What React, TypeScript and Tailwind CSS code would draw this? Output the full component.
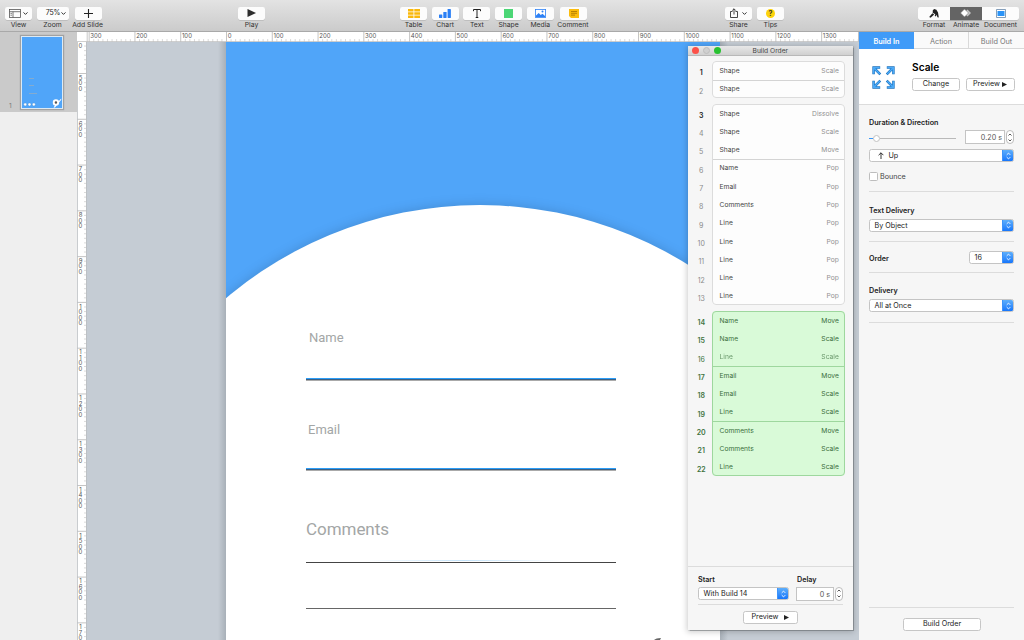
import clsx from "clsx"
import type { ReactNode } from "react"

type Build = { name: string; effect: string; dim?: boolean; strong?: boolean; divider?: boolean }
type Group = { active?: boolean; builds: Build[] }

const groups: Group[] = [
  {
    builds: [
      { name: "Shape", effect: "Scale", strong: true },
      { name: "Shape", effect: "Scale", divider: true },
    ],
  },
  {
    builds: [
      { name: "Shape", effect: "Dissolve", strong: true },
      { name: "Shape", effect: "Scale" },
      { name: "Shape", effect: "Move" },
      { name: "Name", effect: "Pop", divider: true },
      { name: "Email", effect: "Pop" },
      { name: "Comments", effect: "Pop" },
      { name: "Line", effect: "Pop" },
      { name: "Line", effect: "Pop" },
      { name: "Line", effect: "Pop" },
      { name: "Line", effect: "Pop" },
      { name: "Line", effect: "Pop" },
    ],
  },
  {
    active: true,
    builds: [
      { name: "Name", effect: "Move" },
      { name: "Name", effect: "Scale" },
      { name: "Line", effect: "Scale", dim: true },
      { name: "Email", effect: "Move", divider: true },
      { name: "Email", effect: "Scale" },
      { name: "Line", effect: "Scale" },
      { name: "Comments", effect: "Move", divider: true },
      { name: "Comments", effect: "Scale" },
      { name: "Line", effect: "Scale" },
    ],
  },
]

// one hundred points at the current zoom
const STEP = 45.78
const columns = [-300, -200, -100, 0, 100, 200, 300, 400, 500, 600, 700, 800, 900, 1000, 1100, 1200, 1300]
const rows = [400, 500, 600, 700, 800, 900, 1000, 1100, 1200, 1300, 1400, 1500, 1600, 1700]
const tenths = [1, 2, 3, 4, 5, 6, 7, 8, 9]

function Chevron() {
  return (
    <svg className="h-[3px] w-[5px]" viewBox="0 0 5 3" fill="none" stroke="#333" strokeWidth="1">
      <path d="M.5 .4 2.5 2.4 4.5 .4" />
    </svg>
  )
}

function ToolButton({ label, className, children }: { label: string; className?: string; children: ReactNode }) {
  return (
    <div className="flex flex-col items-center">
      <div className={clsx("flex h-[13.5px] items-center justify-center rounded-[2px] bg-[#fcfcfc] shadow-[0_0.5px_0.5px_rgba(0,0,0,0.2)]", className ?? "w-[27px]")}>
        {children}
      </div>
      <div className="flex h-[9px] w-0 justify-center text-[6.8px] leading-[9px] whitespace-nowrap text-[#333]">{label}</div>
    </div>
  )
}

function Toolbar() {
  return (
    <header className="flex h-8 shrink-0 border-b border-[#a9a9a9] bg-linear-to-b from-[#e3e3e3] to-[#cbcbcb] pt-[6.5px]">
      <div className="flex w-[238px] gap-[4.5px] pl-[5px]">
        <ToolButton label="View">
          <svg className="mr-[2px] h-[9px] w-[12px]" viewBox="0 0 12 9" fill="none" stroke="#555" strokeWidth=".8">
            <rect x=".5" y=".5" width="11" height="8" />
            <path d="M.5 2.7h11M4 2.7v5.8M1.5 4.4h1.4M1.5 6.2h1.4" />
          </svg>
          <Chevron />
        </ToolButton>
        <ToolButton label="Zoom" className="w-[32px] pl-[7px]">
          <span className="mr-[1px] text-[7px] tracking-[-0.2px] text-[#222]">75%</span>
          <Chevron />
        </ToolButton>
        <ToolButton label="Add Slide" className="ml-[2px] w-[27px]">
          <svg className="h-[9px] w-[9px]" viewBox="0 0 9 9" stroke="#222" strokeWidth="1.1">
            <path d="M4.5 0v9M0 4.5h9" />
          </svg>
        </ToolButton>
      </div>
      <div className="w-[162px]">
        <div className="w-[27px]">
          <ToolButton label="Play">
            <svg className="h-[8px] w-[9px]" viewBox="0 0 9 8"><path d="M.5 0 9 4 .5 8z" fill="#2d2d2d" /></svg>
          </ToolButton>
        </div>
      </div>
      <div className="flex w-[325px] gap-[4.7px]">
        <ToolButton label="Table">
          <svg className="h-[9px] w-[12px]" viewBox="0 0 12 9" fill="#f9b80c">
            <path d="M0 0h5.5v2.5H0zM6.3 0H12v2.5H6.3zM0 3.2h5.5v2.5H0zM6.3 3.2H12v2.5H6.3zM0 6.4h5.5V9H0zM6.3 6.4H12V9H6.3z" />
          </svg>
        </ToolButton>
        <ToolButton label="Chart">
          <svg className="h-[9px] w-[12px]" viewBox="0 0 12 9" fill="#2c80f5">
            <rect y="5.5" width="3.3" height="3.5" rx=".4" />
            <rect x="4.3" y="3" width="3.3" height="6" rx=".4" />
            <rect x="8.6" width="3.3" height="9" rx=".4" />
          </svg>
        </ToolButton>
        <ToolButton label="Text">
          <svg className="h-[9px] w-[8px]" viewBox="0 0 8 9" fill="none" stroke="#222" strokeWidth="1">
            <path d="M.5 2.2V.5h7v1.7M4 .5v8M2.7 8.5h2.6" />
          </svg>
        </ToolButton>
        <ToolButton label="Shape"><div className="h-[9px] w-[9px] bg-[#4bd675]" /></ToolButton>
        <ToolButton label="Media">
          <svg className="h-[9px] w-[11px]" viewBox="0 0 11 9">
            <rect x=".4" y=".4" width="10.2" height="8.2" fill="#fff" stroke="#2c80f5" strokeWidth=".8" />
            <path d="M1 8V6.5L3.7 4l2 2 1.8-1.2L10 7v1z" fill="#2c80f5" />
            <circle cx="7.5" cy="2.6" r="1" fill="#2c80f5" />
          </svg>
        </ToolButton>
        <ToolButton label="Comment" className="ml-[2px] w-[27px]">
          <svg className="h-[9px] w-[10px]" viewBox="0 0 10 9">
            <path d="M0 0h10v9H2L0 7z" fill="#fbbc0d" />
            <path d="M2 2.5h6M2 4.3h6M2 6.1h4" stroke="#a87400" strokeWidth=".8" />
          </svg>
        </ToolButton>
      </div>
      <div className="flex w-[193px] gap-[5px]">
        <ToolButton label="Share">
          <svg className="mr-[4px] h-[10px] w-[8px]" viewBox="0 0 8 10" fill="none" stroke="#333" strokeWidth=".9">
            <path d="M2.5 3.5h-2v6h7v-6h-2M4 6.5V.8M2.2 2.6 4 .8l1.8 1.8" />
          </svg>
          <Chevron />
        </ToolButton>
        <ToolButton label="Tips">
          <div className="h-[9px] w-[9px] rounded-full bg-[#fcd20a] text-center text-[7px] leading-[9px] font-bold text-[#333]">?</div>
        </ToolButton>
      </div>
      <div className="flex">
        <ToolButton label="Format" className="w-[32px] rounded-r-none">
          <svg className="h-[9px] w-[10px]" viewBox="0 0 10 9" fill="#222">
            <path d="M3.8 1.2 5.2 0 7.4.8 9 3.4l.8 5-1.4-.2-.7-2.4-.9 1.6-1.1-.6.6-1.6-2.600-1.400z" />
            <path d="M3.4 4.2 5.2 5.500 1.6 8.800.2 8z" />
          </svg>
        </ToolButton>
        <ToolButton label="Animate" className="w-[32px] rounded-none bg-[#646464]!">
          <svg className="h-[8px] w-[12px]" viewBox="0 0 12 8">
            <path d="M7.500 .5 11 4 7.500 7.500 4 4z" fill="#c4c4c4" />
            <path d="M4.5 0 8.5 4l-4 4-4-4z" fill="#fff" stroke="#646464" strokeWidth=".5" />
          </svg>
        </ToolButton>
        <ToolButton label="Document" className="w-[37px] rounded-l-none">
          <svg className="h-[9px] w-[10px]" viewBox="0 0 10 9">
            <rect x=".4" y=".4" width="9.2" height="8.2" rx=".5" fill="#fff" stroke="#53799f" strokeWidth=".8" />
            <rect x="1.5" y="2" width="7" height="5" fill="#2993f7" />
          </svg>
        </ToolButton>
      </div>
    </header>
  )
}

function Navigator() {
  return (
    <aside className="w-[77px] shrink-0 bg-[#efefef]">
      <div className="flex h-[80px] bg-[#cacaca] pt-[3.5px]">
        <div className="w-[21px] pt-[65px] pl-[9px] text-[6.5px] leading-[10px] text-[#777]">1</div>
        <div className="flex h-[73.5px] w-[42px] flex-col border border-[#dceaf5] bg-[#50a5f9] shadow-[0_0_1px_1px_rgba(100,100,100,0.4)]">
          <div className="mt-[41px] ml-[7px] h-[1px] w-[5px] bg-[#84abcf]" />
          <div className="mt-[7px] ml-[7px] h-[1px] w-[5px] bg-[#84abcf]" />
          <div className="mt-[7px] ml-[7px] h-[1px] w-[8px] bg-[#84abcf]" />
          <svg className="mt-[4px] h-[10px] w-[40px]" viewBox="0 0 40 10">
            <g fill="#fff" stroke="#3f81bd" strokeWidth=".3">
              <circle cx="2.5" cy="6.8" r="1.5" />
              <circle cx="7" cy="6.8" r="1.5" />
              <circle cx="11.5" cy="6.8" r="1.5" />
            </g>
            <path d="M32 10l2-3 6-6.5v1.3L35 8l-1.5 2z" fill="#fff" />
            <circle cx="34.5" cy="4.6" r="2.3" fill="#555" stroke="#fff" strokeWidth="2" />
          </svg>
        </div>
      </div>
    </aside>
  )
}

function TopRuler() {
  return (
    <svg className="h-[10px] w-[782px] shrink-0 bg-white" viewBox="77 32 782 10">
      {columns.map((value) => {
        const x = 226.5 + (value / 100) * STEP
        return (
          <g key={value}>
            <path d={`M${x} 32v10`} stroke="#b5b5b5" strokeWidth=".8" />
            {tenths.map((n) => (
              <path key={n} d={`M${x + (n * STEP) / 10} 39v3`} stroke="#d0d0d0" strokeWidth=".8" />
            ))}
            <text x={x + 1.2} y="38.4" fontSize="6" fill="#555">{Math.abs(value)}</text>
          </g>
        )
      })}
      <path d="M77 32h10.2v10H77z" fill="#fff" />
      <path d="M87.2 32v10M77 41.6h782" stroke="#bbb" strokeWidth=".8" />
    </svg>
  )
}

function SideRuler() {
  return (
    <svg className="h-[598px] w-[10px] shrink-0 bg-white" viewBox="77 42 10 598">
      {rows.map((value) => {
        const y = 73.5 + ((value - 500) / 100) * STEP
        return (
          <g key={value}>
            <path d={`M77 ${y}h10`} stroke="#b5b5b5" strokeWidth=".8" />
            {tenths.map((n) => (
              <path key={n} d={`M84 ${y + (n * STEP) / 10}h3`} stroke="#d0d0d0" strokeWidth=".8" />
            ))}
            {String(value).split("").map((digit, i) => {
              const baseline = y + 6.3 + i * 5.5
              // digits scrolled above the ruler or below the window are left out
              if (baseline < 44 || baseline > 641) return null
              return <text key={i} x="80.5" y={Math.max(baseline, 47.5)} fontSize="6" textAnchor="middle" fill="#555">{digit}</text>
            })}
          </g>
        )
      })}
      <path d="M77.3 42v598M86.5 42v598" stroke="#bcc0c4" />
    </svg>
  )
}

function Slide() {
  return (
    <div className="relative ml-[139px] h-[598px] w-[494px] overflow-hidden bg-[#50a5f9]">
      <svg className="absolute inset-0 h-[598px] w-[494px]" viewBox="226 42 494 598">
        <circle cx="480" cy="598" r="393" fill="#fff" className="drop-shadow-[0_0_6px_rgba(0,0,0,0.16)]" />
        <path d="M226 590h494v50H226z" fill="#fff" />
        <path d="M654 640q2-2 7-2l-1 2z" fill="#666" />
      </svg>
      <div className="relative flex flex-col pt-[286px] pl-[80px] font-['Roboto'] text-[#a3a6a6]">
        <div className="h-[20px] pl-[3px] text-[13px] leading-[20px]">Name</div>
        <div className="mt-[30px] h-[3px] w-[310px] border-b border-[#aaa] bg-linear-to-b from-[#2b9df8] from-50% to-[#3b5f83] to-50%" />
        <div className="mt-[39px] h-[20px] pl-[2px] text-[13px] leading-[20px]">Email</div>
        <div className="mt-[28px] h-[3px] w-[310px] border-b border-[#aaa] bg-linear-to-b from-[#2b9df8] from-50% to-[#3b5f83] to-50%" />
        <div className="mt-[48px] h-[20px] text-[17px] leading-[20px] tracking-[-0.05px]">Comments</div>
        <div className="mt-[21px] ml-[60px] h-[1px] w-[195px] bg-linear-to-r from-transparent via-[#c5e4fb] via-50% to-transparent" />
        <div className="mt-[1px] h-[1px] w-[310px] bg-[#444]" />
        <div className="mt-[45px] h-[1px] w-[310px] bg-[#666]" />
      </div>
    </div>
  )
}

function Stepper({ className }: { className?: string }) {
  return (
    <div className={clsx("flex h-[14px] w-[8px] items-center justify-center rounded-[4px] border border-[#bcbcbc] bg-white", className)}>
      <svg className="h-[9px] w-[4px] shrink-0" viewBox="0 0 4 9" fill="none" stroke="#444" strokeWidth=".9">
        <path d="M.5 2.5 2 1l1.500 1.500M.5 6.500 2 8l1.500-1.500" />
      </svg>
    </div>
  )
}

function Select({ className, children }: { className: string; children: ReactNode }) {
  return (
    <div className={clsx("flex h-[13px] items-stretch justify-between overflow-hidden rounded-[2.5px] border border-[#c4c4c4] bg-white text-[7.2px] leading-[11px] text-[#222]", className)}>
      <span className="flex items-center pl-[4.5px] whitespace-nowrap">{children}</span>
      <span className="flex w-[10px] shrink-0 items-center justify-center bg-linear-to-b from-[#5daefb] to-[#1676fb] shadow-[0_0_0_1px_#3d93fb]">
        <svg className="h-[8px] w-[5px]" viewBox="0 0 5 8" fill="none" stroke="#fff" strokeWidth=".9">
          <path d="M.7 2.9 2.5 1.1l1.8 1.8M.7 5.1l1.8 1.8 1.8-1.8" />
        </svg>
      </span>
    </div>
  )
}

function PushButton({ className, children }: { className: string; children: ReactNode }) {
  return (
    <div className={clsx("flex h-[13px] items-center justify-center rounded-[2.5px] border border-[#c6c6c6] bg-white text-[7.2px] whitespace-nowrap text-[#222]", className)}>
      {children}
    </div>
  )
}

function PlayMark({ className }: { className?: string }) {
  return <svg className={clsx("h-[5px] w-[5px]", className)} viewBox="0 0 5 5"><path d="M0 0 5 2.5 0 5z" fill="#222" /></svg>
}

function BuildOrderWindow() {
  let count = 0
  return (
    <div className="absolute top-[4px] left-[601px] flex h-[584px] w-[165px] flex-col bg-[#f6f6f6] shadow-[0_0_1px_0.5px_rgba(90,95,100,0.5),0_1px_6px_1px_rgba(0,0,0,0.2)]">
      <div className="flex h-[10px] shrink-0 items-center border-b border-[#b8b8b8] bg-linear-to-b from-[#e8e8e8] to-[#d0d0d0] pl-[3.5px]">
        <span className="h-[7px] w-[7px] rounded-full bg-[#fc5149]" />
        <span className="ml-[4px] h-[7px] w-[7px] rounded-full border border-[#bdbdbd] bg-[#d0d0d0]" />
        <span className="ml-[4px] h-[7px] w-[7px] rounded-full bg-[#28c131]" />
        <span className="ml-[32px] pt-[1px] text-[6.7px] leading-[9px] text-[#444]">Build Order</span>
      </div>
      <div className="flex h-[510px] shrink-0 flex-col gap-[6px] pt-[5.3px]">
        {groups.map((group, g) => (
          <div key={g} className="flex">
            <div className="w-[24.4px]">
              {group.builds.map((build, i) => {
                count += 1
                return (
                  <div
                    key={i}
                    className={clsx(
                      "h-[18.3px] w-[20px] pt-[3px] pl-[6.5px] text-center text-[7px] leading-[18.3px]",
                      group.active ? "text-[#3f7341]" : build.strong ? "text-[#222]" : "text-[#8a8a8a]",
                      (build.strong || (group.active && !build.dim)) && "font-semibold",
                    )}
                  >
                    {count}
                  </div>
                )
              })}
            </div>
            <div
              className={clsx(
                "w-[133px] rounded-[4px] outline -outline-offset-1",
                group.active ? "bg-[#d9fad8] outline-[#9ed79e]" : "bg-[#fdfdfd] outline-[#dcdcdc]",
              )}
            >
              {group.builds.map((build, i) => (
                <div
                  key={i}
                  className={clsx(
                    "flex h-[18.3px] items-center justify-between pt-[1px] pr-[6.6px] pl-[7.2px] text-[6.7px]",
                    build.divider && (group.active ? "shadow-[inset_0_1px_0_#9ed79e]" : "shadow-[inset_0_1px_0_#d4d4d4]"),
                    build.dim && "opacity-70",
                    group.active ? "text-[#3a6e3c]" : "text-[#444]",
                  )}
                >
                  <span>{build.name}</span>
                  <span className={clsx(!group.active && "text-[#919191]")}>{build.effect}</span>
                </div>
              ))}
            </div>
          </div>
        ))}
      </div>
      <div className="flex flex-1 flex-col border-t border-[#dcdcdc] px-[10px]">
        <div className="mt-[8px] flex text-[7.2px] leading-[9px] font-semibold text-[#222]">
          <span className="w-[99px]">Start</span>
          <span>Delay</span>
        </div>
        <div className="mt-[2.5px] flex items-center">
          <Select className="w-[91px]">With Build 14</Select>
          <div className="ml-[7px] h-[14px] w-[38px] border border-[#c4c4c4] bg-white pr-[3px] text-right text-[7.2px] leading-[13px] text-[#555]">0 s</div>
          <Stepper className="ml-[1px]" />
        </div>
        <div className="mt-[3px] h-[1px] bg-[#dcdcdc]" />
        <PushButton className="mt-[6px] ml-[45px] w-[55px]">
          Preview <PlayMark className="ml-[6px]" />
        </PushButton>
      </div>
    </div>
  )
}

function ScaleIcon() {
  return (
    <svg className="h-[23px] w-[23px]" viewBox="0 0 23 23" fill="none">
      {["rotate(0 11.5 11.5)", "rotate(90 11.5 11.5)", "rotate(180 11.5 11.5)", "rotate(270 11.5 11.5)"].map((turn) => (
        <g key={turn} transform={turn}>
          <path d="M8.2 1.600H1.600V8.200M2 2 8.300 8.300" stroke="#1f72bb" strokeWidth="2.500" />
          <path d="M7.700 1.600H1.600V7.700M2 2 7.900 7.900" stroke="#4aaaf9" strokeWidth="1.400" />
        </g>
      ))}
    </svg>
  )
}

function Heading({ children, className }: { children: ReactNode; className?: string }) {
  return <div className={clsx("text-[7.2px] leading-[10px] font-semibold whitespace-nowrap text-[#222]", className)}>{children}</div>
}

function Inspector() {
  return (
    <aside className="flex w-[165px] shrink-0 flex-col bg-[#f6f6f6] shadow-[-1px_0_0_#bcc0c4]">
      <div className="flex h-[17px] shrink-0 border-b border-[#d9d9d9] bg-[#fafafa] text-center text-[7.3px] leading-[19px] text-[#777]">
        <div className="h-[17px] w-[55px] bg-[#409bf8] font-semibold text-white">Build In</div>
        <div className="w-[55px] border-r border-[#d9d9d9]">Action</div>
        <div className="w-[55px]">Build Out</div>
      </div>
      <div className="flex h-[56px] shrink-0 border-b border-[#dcdcdc] bg-white pt-[12px]">
        <div className="w-[53px] pt-[4.5px] pl-[13px]"><ScaleIcon /></div>
        <div>
          <div className="text-[10.2px] leading-[12px] font-semibold text-black">Scale</div>
          <div className="mt-[5px] flex gap-[5.5px]">
            <PushButton className="w-[48px]">Change</PushButton>
            <PushButton className="w-[49px]">Preview <PlayMark className="ml-[2px]" /></PushButton>
          </div>
        </div>
      </div>
      <div className="flex flex-1 flex-col px-[10px]">
        <Heading className="mt-[13px]">Duration &amp; Direction</Heading>
        <div className="mt-[2px] flex h-[14px] items-center">
          <div className="flex w-[87px] items-center pt-[2.5px]">
            <span className="h-[1.5px] w-[4px] bg-[#3a97f7]" />
            <span className="h-[7px] w-[7px] rounded-full border border-[#c2c2c2] bg-white" />
            <span className="h-[1.5px] flex-1 bg-[#b9b9b9]" />
          </div>
          <div className="ml-[9.5px] h-[14px] w-[40px] border border-[#c4c4c4] bg-white pr-[2px] text-right text-[7.2px] leading-[13px] text-[#555]">0.20 s</div>
          <Stepper className="ml-[1px]" />
        </div>
        <Select className="mt-[5px]">
          <svg className="mr-[5px] ml-[3px] h-[7px] w-[6px]" viewBox="0 0 6 7" fill="none" stroke="#222" strokeWidth=".9">
            <path d="M3 7V.8M.6 3.2 3 .8l2.4 2.4" />
          </svg>
          Up
        </Select>
        <div className="mt-[9px] flex h-[11px] items-center text-[7.2px] text-[#444]">
          <span className="mr-[2px] h-[9px] w-[9px] rounded-[1.5px] border border-[#bdbdbd] bg-white" />
          <span className="pt-[1px]">Bounce</span>
        </div>
        <div className="mt-[9px] h-[1px] bg-[#dcdcdc]" />
        <Heading className="mt-[13.5px]">Text Delivery</Heading>
        <Select className="mt-[3px]">By Object</Select>
        <div className="mt-[9px] h-[1px] bg-[#dcdcdc]" />
        <div className="mt-[9px] flex h-[13px] items-center justify-between">
          <Heading className="pt-[3px]">Order</Heading>
          <Select className="w-[45px]">16</Select>
        </div>
        <div className="mt-[8px] h-[1px] bg-[#dcdcdc]" />
        <Heading className="mt-[13.5px]">Delivery</Heading>
        <Select className="mt-[3px]">All at Once</Select>
        <div className="mt-[9.5px] h-[1px] bg-[#dcdcdc]" />
        <div className="mt-auto h-[1px] bg-[#dcdcdc]" />
        <PushButton className="mt-[9.5px] mb-[9.5px] ml-[34px] w-[78px]">Build Order</PushButton>
      </div>
    </aside>
  )
}

export default function App() {
  return (
    <div className="flex h-[640px] w-[1024px] flex-col overflow-hidden font-['Inter',sans-serif]">
      <Toolbar />
      <div className="flex h-[608px]">
        <Navigator />
        <div className="flex w-[782px] shrink-0 flex-col">
          <TopRuler />
          <div className="flex">
            <SideRuler />
            <main className="relative h-[598px] w-[772px] bg-[#c5ccd4]">
              <div className="absolute inset-y-0 left-[131px] w-[8px] bg-linear-to-r from-transparent to-[#a8b0b8]" />
              <div className="absolute inset-y-0 left-[633px] w-[8px] bg-linear-to-l from-transparent to-[#a8b0b8]" />
              <Slide />
              <BuildOrderWindow />
            </main>
          </div>
        </div>
        <Inspector />
      </div>
    </div>
  )
}
